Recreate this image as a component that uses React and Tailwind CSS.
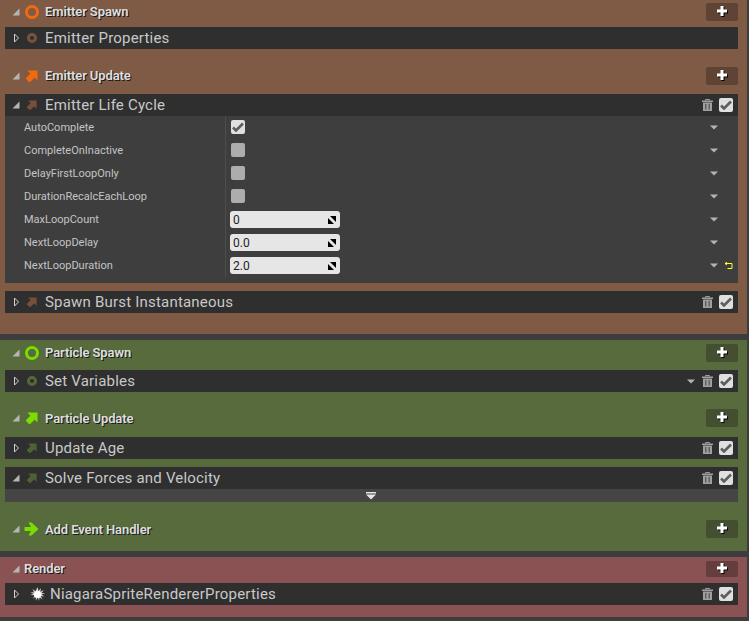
import React from "react";

function Tri({ open }) {
  if (open) {
    return (
      <svg width="8" height="8" viewBox="0 0 8 8" className="shrink-0">
        <path d="M7.5 0.5v7H0.5z" fill="#b5b5b5" />
      </svg>
    );
  }
  return (
    <svg width="7" height="10" viewBox="0 0 7 10" className="shrink-0">
      <path d="M1.5 1l4 4-4 4z" fill="none" stroke="#d0d0d0" strokeWidth="1" />
    </svg>
  );
}

function Ring({ color, size = 14, stroke = 3 }) {
  const r = size / 2 - stroke / 2;
  return (
    <svg width={size} height={size} viewBox={`0 0 ${size} ${size}`} className="shrink-0">
      <circle cx={size / 2} cy={size / 2} r={r} fill="none" stroke={color} strokeWidth={stroke} />
    </svg>
  );
}

function Arrow({ color, size = 12 }) {
  return (
    <svg width={size} height={size} viewBox="0 0 12 12" className="shrink-0">
      <path d="M1.5 0.5H11.5V10.5L9 8V7.5L4 12H3L0 9V8L4.5 3.5H4z" fill={color} />
    </svg>
  );
}

function RightArrow() {
  return (
    <svg width="15" height="14" viewBox="0 0 15 14" className="shrink-0">
      <path d="M7.5 0.5L14.5 7L7.5 13.5H4.5L7 9H0.5V5H7L4.5 0.5z" fill="#7bdc00" />
    </svg>
  );
}

function Burst() {
  return (
    <svg width="15" height="15" viewBox="0 0 15 15" className="shrink-0">
      <path
        d="M7.5 0l1 4 2.5-3-.7 3.7 3.5-1.7-2.3 3 3.5.5-3.5 1 3 1.9-3.7-.4 1.7 3.5-3-2.3-.5 3.8-1-3.6-2.4 3 .6-3.8-3.4 1.8 2.2-3.1L0 8l3.5-1-3-1.9 3.7.4L2.5 2l3 2.3z"
        fill="#d8d8d8"
      />
      <circle cx="7.5" cy="7.5" r="3.5" fill="#ffffff" />
    </svg>
  );
}

function Trash() {
  return (
    <svg width="11" height="12" viewBox="0 0 11 12" className="shrink-0">
      <path d="M3.5 1.5V0.5h4v1" fill="none" stroke="#a0a0a0" />
      <path d="M0 1.5h11v1.5H0z" fill="#a0a0a0" />
      <path d="M1 3.5h9v8.5H1z" fill="#a0a0a0" />
      <path d="M3 5h1.5v5.5H3zM6.5 5H8v5.5H6.5z" fill="#606060" />
    </svg>
  );
}

function Check() {
  return (
    <div className="w-[14px] h-[14px] rounded-[2px] flex items-center justify-center shrink-0 bg-[#e0e0e0]">
      <svg width="12" height="10" viewBox="0 0 12 10">
        <path d="M1 5.5l3 3L11 1.5" fill="none" stroke="#5e5e5e" strokeWidth="2.6" />
      </svg>
    </div>
  );
}

function Unchecked() {
  return <div className="w-[14px] h-[14px] rounded-[2px] shrink-0 bg-[#adadad]" />;
}

function Caret() {
  return (
    <svg width="8" height="5" viewBox="0 0 8 5" className="shrink-0">
      <path d="M0 0.5h8L4 4.5z" fill="#b4b4b4" />
    </svg>
  );
}

function Plus({ bg, h = "h-[18px]" }) {
  return (
    <div className={`w-[32px] ${h} rounded-[2px] flex items-center justify-center shrink-0 ${bg}`}>
      <svg width="12" height="12" viewBox="0 0 12 12">
        <path d="M5.5 1h3v3.5H12v3H8.500V11h-3V7.500H2v-3h3.500z" fill="#000" />
        <path d="M4.500 0h3v3.500H11v3H7.500V10h-3V6.500H1v-3h3.500z" fill="#fff" />
      </svg>
    </div>
  );
}

function Header({ title, icon, plus, className = "", h, slot = "w-[21px] pl-[1px]", textClass = "pb-[2px]" }) {
  return (
    <div className={`flex items-center justify-between ${className}`}>
      <div className="flex items-center">
        <div className="w-[19px] flex pl-[7px]">
          <Tri open />
        </div>
        {icon ? <div className={`${slot} flex items-center`}>{icon}</div> : null}
        <span className={`text-[13px] leading-none font-semibold tracking-[-0.1px] text-[#dedede] [text-shadow:1px_1px_0_#1a1a1a] ${textClass}`}>{title}</span>
      </div>
      <Plus bg={plus} h={h} />
    </div>
  );
}

function ModuleRow({ title, icon, open, className = "", tools = true, caret, slot = "w-[21px] pl-[3px]" }) {
  return (
    <div className={`h-[22px] bg-[#2f2f2f] flex items-center pr-[5px] ${className}`}>
      <div className={`w-[19px] flex ${open ? "pl-[7px]" : "pl-[8px]"}`}>
        <Tri open={open} />
      </div>
      <div className={`${slot} flex items-center`}>{icon}</div>
      <span className="flex-1 text-[15px] text-[#c8c8c8] tracking-[0.2px]">{title}</span>
      {tools ? (
        <div className="flex items-center">
          {caret ? (
            <div className="mr-[7px] flex">
              <Caret />
            </div>
          ) : null}
          <Trash />
          <div className="ml-[6px]">
            <Check />
          </div>
        </div>
      ) : null}
    </div>
  );
}

const props = [
  { name: "AutoComplete", type: "check", on: true },
  { name: "CompleteOnInactive", type: "check" },
  { name: "DelayFirstLoopOnly", type: "check" },
  { name: "DurationRecalcEachLoop", type: "check" },
  { name: "MaxLoopCount", type: "num", value: "0" },
  { name: "NextLoopDelay", type: "num", value: "0.0" },
  { name: "NextLoopDuration", type: "num", value: "2.0", reset: true },
];

function PropRow({ p }) {
  return (
    <div className="h-[23px] flex items-center">
      <div className="w-[221px] h-full flex items-center pl-[19px] pt-[1px] text-[11px] text-[#c4c4c4] border-r border-[#4d4d4d]">
        {p.name}
      </div>
      <div className="flex-1 flex items-center pl-[4px]">
        {p.type === "check" ? (
          <div className="pl-[1px] mb-[1px]">{p.on ? <Check /> : <Unchecked />}</div>
        ) : (
          <div className="w-[110px] h-[17px] rounded-[3px] bg-[#e6e6e6] flex items-center justify-between pl-[3px] pr-[4px]">
            <span className="text-[12px] text-[#222]">{p.value}</span>
            <svg width="8" height="8" viewBox="0 0 8 8">
              <path d="M0 8V2l6 6z" fill="#000" />
              <path d="M8 0v6L2 0z" fill="#000" />
            </svg>
          </div>
        )}
      </div>
      <div className="w-[28px] flex items-center">
        <Caret />
        {p.reset ? (
          <svg width="8" height="7" viewBox="0 0 8 7" className="ml-[7px]">
            <path d="M0 1.500h7v5H2.500M2 0L0 1.500 2 3" fill="none" stroke="#ffff33" strokeWidth="1" />
          </svg>
        ) : null}
      </div>
    </div>
  );
}

export default function App() {
  return (
    <div className="w-[749px] h-[621px] bg-[#3d3d3d] overflow-hidden font-['Roboto',sans-serif]">
      {/* emitter group */}
      <section className="h-[334px] mr-[2px] bg-[#7f5a45] pt-[3px] pl-[5px] pr-[9px]">
        <Header title="Emitter Spawn" plus="bg-[#5f4435]" icon={<Ring color="#f26a0d" />} />
        <ModuleRow title="Emitter Properties" className="mt-[6px]" tools={false} icon={<Ring color="#76553f" size={10} stroke={3} />} />
        <Header title="Emitter Update" plus="bg-[#5f4435]" className="mt-[18px]" slot="w-[21px] pl-[2px]" icon={<Arrow color="#f26a0d" />} />
        <ModuleRow title="Emitter Life Cycle" open className="mt-[9px]" icon={<Arrow color="#76503b" size={10} />} />
        <div className="h-[167px] bg-[#3e3e3e]">
          {props.map((p) => (
            <PropRow key={p.name} p={p} />
          ))}
        </div>
        <ModuleRow title="Spawn Burst Instantaneous" className="mt-[8px]" icon={<Arrow color="#76503b" size={10} />} />
      </section>

      {/* particle group */}
      <section className="h-[211px] mt-[6px] mr-[2px] bg-[#586b3d] pt-[4px] pl-[5px] pr-[9px]">
        <Header title="Particle Spawn" plus="bg-[#434f30]" icon={<Ring color="#7bdc00" />} />
        <ModuleRow title="Set Variables" caret className="mt-[8px]" icon={<Ring color="#55683c" size={10} stroke={3} />} />
        <Header title="Particle Update" plus="bg-[#434f30]" className="mt-[17px]" slot="w-[21px] pl-[2px]" textClass="pt-[1px]" icon={<Arrow color="#7bdc00" />} />
        <ModuleRow title="Update Age" className="mt-[10px]" icon={<Arrow color="#4f6136" size={10} />} />
        <ModuleRow title="Solve Forces and Velocity" open className="mt-[8px]" icon={<Arrow color="#4f6136" size={10} />} />
        <div className="h-[13px] bg-[#454545] flex items-center justify-center">
          <svg width="10" height="8" viewBox="0 0 10 8" className="-ml-[2px]">
            <path d="M0 0h10v1.500H0zM0 2.500h10L5 7.500z" fill="#e6e6e6" />
          </svg>
        </div>
        <Header title="Add Event Handler" plus="bg-[#434f30]" className="mt-[18px]" slot="w-[21px]" textClass="pt-[1px]" icon={<RightArrow />} />
      </section>

      {/* render group */}
      <section className="h-[60px] mt-[6px] mr-[2px] bg-[#8a5252] pt-[4px] pl-[5px] pr-[9px]">
        <Header title="Render" plus="bg-[#663d3d]" h="h-[16px]" />
        <ModuleRow title="NiagaraSpriteRendererProperties" className="mt-[6px]" slot="w-[26px] pl-[6px]" icon={<Burst />} />
      </section>
    </div>
  );
}
